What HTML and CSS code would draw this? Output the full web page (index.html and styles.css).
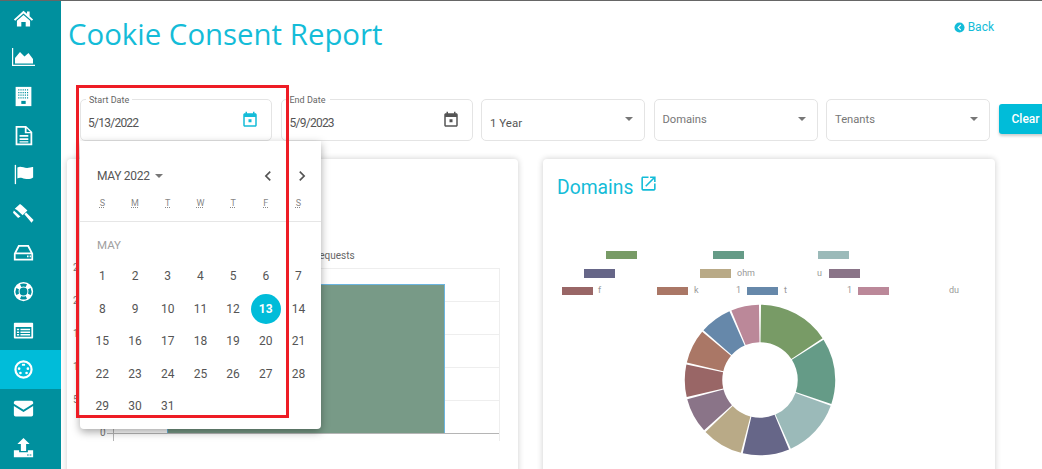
FILE: index.html
```html
<!DOCTYPE html>
<html lang="en">
<head>
    <meta charset="UTF-8">
    <title>Cookie Consent Report</title>
    <link rel="stylesheet" href="styles.css">
</head>
<body>
    <aside class="sidebar">
        <a class="nav-item"><svg class="icon" viewBox="0 0 24 24"><path d="M12 3 1 13l1.5 1.7L12 6.2l9.5 8.5L23 13l-4-3.6V4h-3v2.7z"/><path d="M12 8 4.5 14.6V21h5v-5h5v5h5v-6.4z"/></svg></a>
        <a class="nav-item"><svg class="icon icon-wide" viewBox="0 0 24 19"><path d="M1 0h1.2v16.8H24V18H1z"/><path d="M4 15.5V10l5-6 4.5 4.5L17.5 5 22 11v4.5z"/></svg></a>
        <a class="nav-item"><svg class="icon" viewBox="0 0 24 24"><path d="M3 1h18v22H3z"/><path d="M6 4.5h12M6 7.5h12M6 10.5h12M6 13.5h12" stroke="#00909e" stroke-width="1.3" stroke-dasharray="1.3 1.2"/><path d="M9.5 17h5v3.5h-5z" fill="#00909e"/></svg></a>
        <a class="nav-item"><svg class="icon" viewBox="0 0 24 24"><path d="M3 1h12l7 7v15H3zm2 2v18h15V9.5h-6.5V3zm10.5.8V8h4.2z" fill-rule="evenodd"/><path d="M7.5 11.500h10v2h-10zM7.5 15h10v2h-10zM7.5 18.500h10V20h-10z"/></svg></a>
        <a class="nav-item"><svg class="icon" viewBox="0 0 24 24"><path d="M2 1h1.5v22H2z"/><path d="M5 4c5-2.500 8 2 14.500 0 1-.3 2.500-.8 3.500-.5v12c-4 3-9.500 1.500-12.500.5C8.500 15.500 6.500 15.500 5 16.500z"/></svg></a>
        <a class="nav-item"><svg class="icon" viewBox="0 0 24 24"><path d="M10 2.500 16.500 8.500 11 14 4.500 8 2 6.500 8 1z"/><path d="M1 8.500 8.500 15.500 5.800 17 0 11zM13 12.800 15 10.800 23.500 19.500 21.200 22.500z"/></svg></a>
        <a class="nav-item"><svg class="icon" viewBox="0 0 24 24"><path d="M6 3.500h12l5 9.500v8H1v-8zm1.400 2L3.900 12h16.200l-3.500-6.500zM3 14v5h18v-5zm13 1.500h1.800v2H16zm3 0h1.500v2H19z" fill-rule="evenodd"/></svg></a>
        <a class="nav-item"><svg class="icon" viewBox="0 0 24 24"><path d="M12 1a11 11 0 1 0 0 22 11 11 0 0 0 0-22zm0 6.500a4.500 4.500 0 1 1 0 9 4.500 4.500 0 0 1 0-9zM8 3.800a9 9 0 0 1 8 0l-1.500 3a6 6 0 0 0-5 0zM3.800 8l3 1.500a6 6 0 0 0 0 5l-3 1.500a9 9 0 0 1 0-8zm16.400 0a9 9 0 0 1 0 8l-3-1.500a6 6 0 0 0 0-5zM9.500 17.200a6 6 0 0 0 5 0l1.500 3a9 9 0 0 1-8 0z" fill-rule="evenodd"/></svg></a>
        <a class="nav-item"><svg class="icon" viewBox="0 0 24 24"><path d="M2 3h20q1 0 1 1v16q0 1-1 1H2q-1 0-1-1V4q0-1 1-1zm1 5v11h18V8z" fill-rule="evenodd"/><path d="M4.500 10H7v1.800H4.500zM8.500 10h11v1.800h-11zM4.500 13H7v1.800H4.500zM8.500 13h11v1.800h-11zM4.500 16H7v1.800H4.500zM8.500 16h11v1.800h-11z"/></svg></a>
        <a class="nav-item active"><svg class="icon" viewBox="0 0 24 24"><path d="M12 1.500a10.500 10.500 0 1 0 0 21 10.500 10.500 0 0 0 0-21zm0 2.500a8 8 0 1 1 0 16 8 8 0 0 1 0-16z" fill-rule="evenodd"/><path d="M10.200 5.500h3.600v2.200h-3.600z"/><circle cx="7" cy="11" r="1.500"/><circle cx="17" cy="11" r="1.500"/><circle cx="8.500" cy="16" r="1.500"/><circle cx="15.500" cy="16" r="1.500"/></svg></a>
        <a class="nav-item"><svg class="icon" viewBox="0 0 24 24"><path d="M3 3h18q2 0 2 2v1.500L12 13.500 1 6.500V5q0-2 2-2z"/><path d="M1 9l11 7 11-7v10q0 2-2 2H3q-2 0-2-2z"/></svg></a>
        <a class="nav-item"><svg class="icon" viewBox="0 0 24 24"><path d="M12 1l7 7h-4v8H9V8H5z"/><path d="M1 15h6v2.500h10V15h6v8H1zm15 5v1h2v-1zm3 0v1h2v-1z" fill-rule="evenodd"/></svg></a>
    </aside>

    <main class="content">
        <header class="page-head">
            <h1 class="page-title">Cookie Consent Report</h1>
            <a class="back-link"><svg class="back-icon" viewBox="0 0 24 24"><circle cx="12" cy="12" r="11"/><path d="M15.400 7.400 14 5.500 7.500 12l6.500 6.500 1.400-1.900L10.800 12z" fill="#fff"/></svg>Back</a>
        </header>

        <section class="filters">
            <div class="field field-date">
                <span class="field-label">Start Date</span>
                <span class="field-value">5/13/2022</span>
                <svg class="cal-icon cal-icon-on" viewBox="0 0 24 24"><path d="M19 3h-1V1h-2v2H8V1H6v2H5c-1.100 0-2 .9-2 2v14c0 1.100.9 2 2 2h14c1.100 0 2-.9 2-2V5c0-1.100-.9-2-2-2zm0 16H5V8h14v11zM10 11h4v4h-4z"/></svg>

                <div class="picker">
                    <div class="picker-head">
                        <span class="picker-month">MAY 2022<i class="caret"></i></span>
                        <span class="picker-arrows">
                            <svg viewBox="0 0 24 24"><path d="M15.400 7.400 14 6l-6 6 6 6 1.400-1.400L10.800 12z"/></svg>
                            <svg viewBox="0 0 24 24"><path d="M8.600 16.600 10 18l6-6-6-6-1.400 1.400 4.600 4.600z"/></svg>
                        </span>
                    </div>
                    <div class="picker-week">
                        <abbr>S</abbr><abbr>M</abbr><abbr>T</abbr><abbr>W</abbr><abbr>T</abbr><abbr>F</abbr><abbr>S</abbr>
                    </div>
                    <div class="picker-label">MAY</div>
                    <div class="picker-days">
                        <span>1</span><span>2</span><span>3</span><span>4</span><span>5</span><span>6</span><span>7</span>
                        <span>8</span><span>9</span><span>10</span><span>11</span><span>12</span><span class="selected">13</span><span>14</span>
                        <span>15</span><span>16</span><span>17</span><span>18</span><span>19</span><span>20</span><span>21</span>
                        <span>22</span><span>23</span><span>24</span><span>25</span><span>26</span><span>27</span><span>28</span>
                        <span>29</span><span>30</span><span>31</span>
                    </div>
                </div>
            </div>
            <div class="field field-date">
                <span class="field-label field-label-end">End Date</span>
                <span class="field-value field-value-end">5/9/2023</span>
                <svg class="cal-icon" viewBox="0 0 24 24"><path d="M19 3h-1V1h-2v2H8V1H6v2H5c-1.100 0-2 .9-2 2v14c0 1.100.9 2 2 2h14c1.100 0 2-.9 2-2V5c0-1.100-.9-2-2-2zm0 16H5V8h14v11zM10 11h4v4h-4z"/></svg>
            </div>
            <div class="field field-select"><span class="select-value">1 Year</span><i class="caret"></i></div>
            <div class="field field-select"><span class="select-hint">Domains</span><i class="caret"></i></div>
            <div class="field field-select"><span class="select-hint">Tenants</span><i class="caret"></i></div>
            <button class="btn-clear">Clear</button>
        </section>

        <section class="cards">
            <div class="card card-left">
                <svg class="chart" viewBox="67 240 451 229">
                    <text class="chart-legend" x="313" y="259">Requests</text>
                    <path class="grid" d="M113 268.500H499M113 301.500H499M113 334.500H499M113 367.500H499M113 400.500H499M499.500 268V441"/>
                    <rect class="bar" x="167.500" y="284.500" width="277" height="149"/>
                    <path class="axis" d="M107 433.500H499M113.500 425V441"/>
                    <text class="tick" x="73" y="271">2</text>
                    <text class="tick" x="73" y="304">2</text>
                    <text class="tick" x="73" y="337">1</text>
                    <text class="tick" x="73" y="370">1</text>
                    <text class="tick" x="73" y="403">5</text>
                    <text class="tick" x="100" y="436">0</text>
                </svg>
            </div>
            <div class="card card-right">
                <h2 class="card-title">Domains <svg class="ext-icon" viewBox="0 0 24 24"><path d="M19 19H5V5h7V3H5c-1.100 0-2 .9-2 2v14c0 1.100.9 2 2 2h14c1.100 0 2-.9 2-2v-7h-2v7zM14 3v2h3.600l-9.800 9.800 1.400 1.400L19 6.400V10h2V3h-7z"/></svg></h2>
                <svg class="chart" viewBox="543 201 452 268">
                    <rect x="606" y="251" width="31" height="8" fill="#789b66"/>
                    <rect x="713" y="251" width="31" height="8" fill="#659b87"/>
                    <rect x="818" y="251" width="31" height="8" fill="#9bbab9"/>
                    <rect x="584" y="269" width="31" height="9" fill="#666688"/>
                    <rect x="700" y="269" width="31" height="9" fill="#b9aa87"/>
                    <rect x="829" y="269" width="31" height="9" fill="#8a7488"/>
                    <rect x="562" y="287" width="31" height="8" fill="#996666"/>
                    <rect x="657" y="287" width="31" height="8" fill="#aa7766"/>
                    <rect x="747" y="287" width="31" height="8" fill="#6688aa"/>
                    <rect x="858" y="287" width="31" height="8" fill="#bb8899"/>
                    <text class="legend-bit" x="737" y="276">ohm</text>
                    <text class="legend-bit" x="817" y="276">u</text>
                    <text class="legend-bit" x="598" y="293">f</text>
                    <text class="legend-bit" x="694" y="293">k</text>
                    <text class="legend-bit" x="736" y="293">1</text>
                    <text class="legend-bit" x="784" y="293">t</text>
                    <text class="legend-bit" x="847" y="293">1</text>
                    <text class="legend-bit" x="949" y="293">du</text>
                    <g class="donut">
                        <circle pathLength="360" stroke="#789b66" stroke-dasharray="55.4 360" stroke-dashoffset="-0.8"/>
                        <circle pathLength="360" stroke="#659b87" stroke-dasharray="51 360" stroke-dashoffset="-57.6"/>
                        <circle pathLength="360" stroke="#9bbab9" stroke-dasharray="45.8 360" stroke-dashoffset="-110"/>
                        <circle pathLength="360" stroke="#666688" stroke-dasharray="36 360" stroke-dashoffset="-157.3"/>
                        <circle pathLength="360" stroke="#b9aa87" stroke-dasharray="31.6 360" stroke-dashoffset="-194.8"/>
                        <circle pathLength="360" stroke="#8a7488" stroke-dasharray="27.2 360" stroke-dashoffset="-228"/>
                        <circle pathLength="360" stroke="#996666" stroke-dasharray="25.2 360" stroke-dashoffset="-256.8"/>
                        <circle pathLength="360" stroke="#aa7766" stroke-dasharray="26.2 360" stroke-dashoffset="-283.6"/>
                        <circle pathLength="360" stroke="#6688aa" stroke-dasharray="24.7 360" stroke-dashoffset="-311.3"/>
                        <circle pathLength="360" stroke="#bb8899" stroke-dasharray="21.6 360" stroke-dashoffset="-337.6"/>
                    </g>
                </svg>
            </div>
        </section>
    </main>

    <!-- recuadro rojo de la captura -->
    <div class="highlight"></div>
</body>
</html>
```

FILE: styles.css
```css
/* Estilos generales */
html, body {
    height: 469px;
    overflow: hidden;
}

body {
    margin: 0;
    display: flex;
    font-family: Roboto, Arial, sans-serif;
    background-color: #fff;
    color: #555;
    border-top: 1px solid #666;
    box-sizing: border-box;
}

svg {
    fill: currentColor;
}

/* Barra lateral */
.sidebar {
    flex: none;
    width: 61px;
    margin-right: 1px;
    background-color: #00909e;
    color: #fff;
    overflow: hidden;
}

.nav-item {
    display: flex;
    height: 39px;
    align-items: center;
    justify-content: center;
    padding-right: 15px;
    box-sizing: border-box;
}

.nav-item:first-child {
    margin-top: -2px;
}

.nav-item.active {
    background-color: #00bcd9;
}

.icon {
    width: 21px;
    height: 21px;
}

.icon-wide {
    width: 24px;
    height: 19px;
}

/* Contenido */
.content {
    flex: 1;
    min-width: 0;
    position: relative;
    padding-left: 5px;
}

.page-head {
    display: flex;
    justify-content: space-between;
    height: 98px;
}

.page-title {
    margin: 15px 0 0 1px;
    font-family: "Open Sans", sans-serif;
    font-size: 29.4px;
    font-weight: 400;
    line-height: 36px;
    color: #14bcd8;
}

.back-link {
    display: flex;
    align-items: center;
    gap: 3px;
    height: 16px;
    margin: 18px 48px 0 0;
    font-size: 12px;
    color: #14bcd8;
}

.back-icon {
    width: 11px;
    height: 11px;
}

/* Filtros */
.filters {
    display: flex;
    gap: 8.5px;
    padding-left: 13px;
    width: 1100px;
}

.field {
    position: relative;
    flex: none;
    height: 42px;
    border: 1px solid #e4e4e4;
    border-radius: 5px;
    box-sizing: border-box;
}

.field-date {
    width: 192px;
}

.field-select {
    width: 164px;
    display: flex;
    align-items: center;
    justify-content: space-between;
    padding: 0 11px 0 8px;
}

.field-label {
    position: absolute;
    top: -5px;
    left: 5px;
    padding: 0 3px;
    background: #fff;
    font-size: 9px;
    line-height: 11px;
    color: #666;
}

.field-label-end {
    left: 7px;
    padding: 0 5px 0 1px;
}

.field-value {
    position: absolute;
    top: 15px;
    left: 7px;
    font-size: 12px;
    letter-spacing: -0.75px;
    line-height: 16px;
}

.field-value-end {
    left: 8px;
}

.cal-icon {
    position: absolute;
    top: 11px;
    right: 12px;
    width: 18px;
    height: 18px;
    color: #555;
}

.cal-icon-on {
    color: #14bcd8;
}

.select-value {
    margin-top: 5px;
    font-size: 11.5px;
}

.select-hint {
    margin-top: -2px;
    font-size: 11.2px;
    color: #777;
}

.caret {
    display: inline-block;
    margin-top: -3px;
    border-left: 4px solid transparent;
    border-right: 4px solid transparent;
    border-top: 4px solid #777;
}

.btn-clear {
    flex: none;
    width: 70px;
    height: 30px;
    margin-top: 5px;
    padding: 0 0 0 13px;
    text-align: left;
    border: none;
    border-radius: 3px;
    background-color: #00bcd9;
    color: #fff;
    font-family: Roboto, sans-serif;
    font-size: 12px;
    font-weight: 500;
    box-shadow: 0 2px 3px rgba(0, 0, 0, 0.2);
}

/* Calendario */
.picker {
    position: absolute;
    z-index: 5;
    top: 41px;
    left: -1px;
    width: 241px;
    height: 288px;
    background: #fff;
    border-radius: 0 0 4px 4px;
    box-shadow: 0 3px 8px rgba(0, 0, 0, 0.35);
}

.picker-head {
    display: flex;
    justify-content: space-between;
    align-items: center;
    height: 20px;
    padding: 25px 9px 0 17px;
}

.picker-month {
    display: flex;
    align-items: center;
    gap: 5px;
    font-size: 12px;
    letter-spacing: -0.3px;
}

.picker-month .caret {
    margin-top: 0;
}

.picker-arrows {
    display: flex;
    gap: 14px;
}

.picker-arrows svg {
    width: 20px;
    height: 20px;
}

.picker-week {
    display: grid;
    grid-template-columns: repeat(7, 32.7px);
    margin-top: 12px;
    padding: 0 6px;
    height: 23px;
    border-bottom: 1px solid #e6e6e6;
    text-align: center;
    font-size: 9px;
    line-height: 11px;
    color: #888;
}

.picker-week abbr {
    text-decoration: underline dotted;
}

.picker-label {
    margin: 16px 0 0 17px;
    font-size: 11.5px;
    line-height: 14px;
    color: #a0a0a0;
}

.picker-days {
    display: grid;
    grid-template-columns: repeat(7, 32.7px);
    grid-auto-rows: 32.5px;
    margin-top: 8px;
    padding: 0 6px;
    font-size: 12px;
}

.picker-days span {
    display: flex;
    align-items: center;
    justify-content: center;
}

.picker-days .selected {
    width: 30px;
    height: 30px;
    margin: 1px 1.3px;
    border-radius: 50%;
    background-color: #00bcd9;
    color: #fff;
    font-weight: 700;
}

/* Tarjetas */
.cards {
    display: flex;
    gap: 25px;
    margin-top: 18px;
}

.card {
    flex: none;
    height: 340px;
    border-radius: 4px;
    background: #fff;
    box-shadow: 0 0 6px rgba(0, 0, 0, 0.2);
}

.card-left {
    width: 451px;
    padding-top: 81px;
    box-sizing: border-box;
}

.card-right {
    width: 452px;
    box-sizing: border-box;
}

.card-title {
    display: flex;
    align-items: flex-start;
    gap: 6px;
    height: 42px;
    margin: 0;
    padding: 17px 0 0 14px;
    box-sizing: border-box;
    font-size: 19.3px;
    font-weight: 400;
    line-height: 24px;
    color: #14bcd8;
}

.ext-icon {
    width: 19px;
    height: 19px;
    margin-top: -2px;
}

.chart {
    display: block;
    width: 100%;
}

.card-left .chart {
    height: 229px;
}

.card-right .chart {
    height: 268px;
}

.chart-legend {
    font-size: 10px;
    fill: #666;
}

.grid {
    fill: none;
    stroke: #eee;
}

.axis {
    fill: none;
    stroke: #b5b5b5;
}

.bar {
    fill: #789a87;
    stroke: #6cb5e0;
}

.tick {
    font-size: 10px;
    fill: #777;
}

.legend-bit {
    font-size: 9px;
    fill: #999;
}

.donut circle {
    cx: 760px;
    cy: 380px;
    r: 56.5px;
    fill: none;
    stroke-width: 37.5px;
    transform: rotate(-90deg);
    transform-origin: 760px 380px;
}

/* Recuadro de la captura */
.highlight {
    position: absolute;
    z-index: 10;
    left: 76px;
    top: 85px;
    width: 213px;
    height: 333px;
    box-sizing: border-box;
    border: 3px solid #ee1c25;
}
```
